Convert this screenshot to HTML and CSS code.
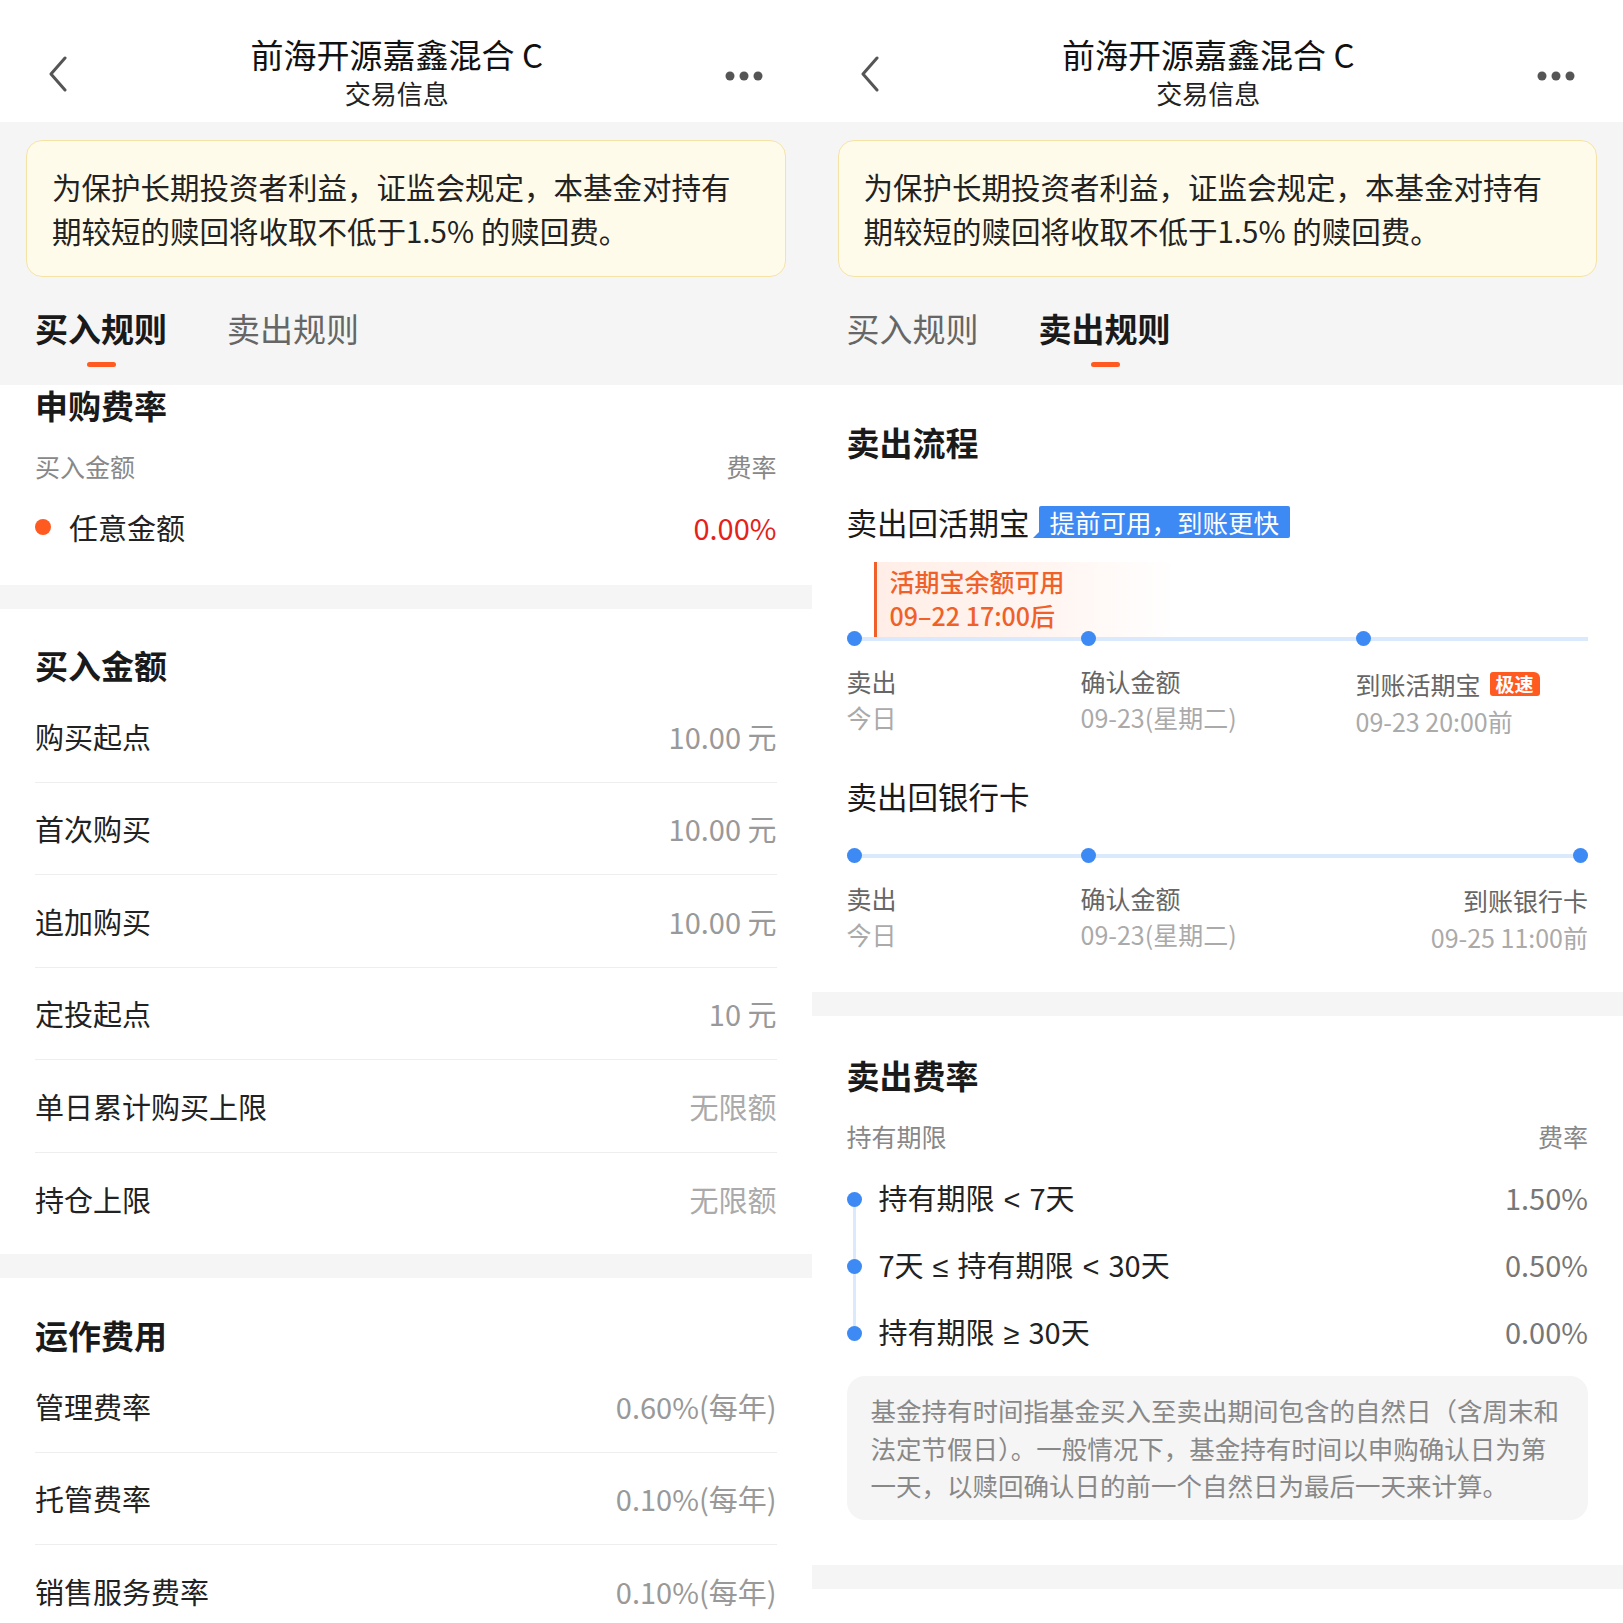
FILE: index.html
```html
<!doctype html>
<html lang="zh-CN">
  <head>
    <meta charset="UTF-8" />
    <meta name="viewport" content="width=device-width, initial-scale=1.0" />
    <title>前海开源嘉鑫混合C 交易信息</title>
    <link rel="stylesheet" href="styles.css">
  </head>
  <body>
    <div class="screens">

      <!-- 买入规则 -->
      <div class="screen">
        <div class="nav">
          <svg class="nav-back" width="20" height="36" viewBox="0 0 20 36"><path d="M17 2 L3 18 L17 34" fill="none" stroke="#555" stroke-width="3" stroke-linecap="round" stroke-linejoin="round"/></svg>
          <div class="nav-title">
            <div class="nav-name">前海开源嘉鑫混合 C</div>
            <div class="nav-sub">交易信息</div>
          </div>
          <svg class="nav-more" width="38" height="10" viewBox="0 0 38 10"><circle cx="5" cy="5" r="4.5" fill="#555"/><circle cx="19" cy="5" r="4.5" fill="#555"/><circle cx="33" cy="5" r="4.5" fill="#555"/></svg>
        </div>

        <div class="notice">为保护长期投资者利益，证监会规定，本基金对持有期较短的赎回将收取不低于1.5% 的赎回费。</div>

        <div class="tabs">
          <div class="tab active">买入规则</div>
          <div class="tab">卖出规则</div>
        </div>

        <div class="section first">
          <div class="section-title">申购费率</div>
          <div class="table-head"><span>买入金额</span><span>费率</span></div>
          <div class="fee-row">
            <span class="fee-name"><i class="bullet orange"></i>任意金额</span>
            <span class="fee-red">0.00%</span>
          </div>
        </div>

        <div class="section amounts">
          <div class="section-title">买入金额</div>
          <div class="kv"><span>购买起点</span><span class="kv-val">10.00 元</span></div>
          <div class="kv"><span>首次购买</span><span class="kv-val">10.00 元</span></div>
          <div class="kv"><span>追加购买</span><span class="kv-val">10.00 元</span></div>
          <div class="kv"><span>定投起点</span><span class="kv-val">10 元</span></div>
          <div class="kv"><span>单日累计购买上限</span><span class="kv-val light">无限额</span></div>
          <div class="kv"><span>持仓上限</span><span class="kv-val light">无限额</span></div>
        </div>

        <div class="section costs">
          <div class="section-title">运作费用</div>
          <div class="kv"><span>管理费率</span><span class="kv-val">0.60%(每年)</span></div>
          <div class="kv"><span>托管费率</span><span class="kv-val">0.10%(每年)</span></div>
          <div class="kv"><span>销售服务费率</span><span class="kv-val">0.10%(每年)</span></div>
        </div>
      </div>

      <!-- 卖出规则 -->
      <div class="screen">
        <div class="nav">
          <svg class="nav-back" width="20" height="36" viewBox="0 0 20 36"><path d="M17 2 L3 18 L17 34" fill="none" stroke="#555" stroke-width="3" stroke-linecap="round" stroke-linejoin="round"/></svg>
          <div class="nav-title">
            <div class="nav-name">前海开源嘉鑫混合 C</div>
            <div class="nav-sub">交易信息</div>
          </div>
          <svg class="nav-more" width="38" height="10" viewBox="0 0 38 10"><circle cx="5" cy="5" r="4.5" fill="#555"/><circle cx="19" cy="5" r="4.5" fill="#555"/><circle cx="33" cy="5" r="4.5" fill="#555"/></svg>
        </div>

        <div class="notice">为保护长期投资者利益，证监会规定，本基金对持有期较短的赎回将收取不低于1.5% 的赎回费。</div>

        <div class="tabs">
          <div class="tab">买入规则</div>
          <div class="tab active">卖出规则</div>
        </div>

        <div class="section flow">
          <div class="section-title">卖出流程</div>

          <div class="flow-head">
            <span>卖出回活期宝</span>
            <span class="blue-tag">提前可用，到账更快</span>
          </div>
          <div class="callout">
            <div>活期宝余额可用</div>
            <div>09–22 17:00后</div>
          </div>
          <div class="steps over">
            <div class="step"><i class="dot"></i><div class="step-name">卖出</div><div class="step-time">今日</div></div>
            <div class="step"><i class="dot"></i><div class="step-name">确认金额</div><div class="step-time">09-23(星期二)</div></div>
            <div class="step tall"><i class="dot"></i><div class="step-name">到账活期宝<span class="fast-tag">极速</span></div><div class="step-time">09-23 20:00前</div></div>
          </div>

          <div class="flow-head bank">卖出回银行卡</div>
          <div class="steps bank-steps">
            <div class="step"><i class="dot"></i><div class="step-name">卖出</div><div class="step-time">今日</div></div>
            <div class="step"><i class="dot"></i><div class="step-name">确认金额</div><div class="step-time">09-23(星期二)</div></div>
            <div class="step end"><i class="dot"></i><div class="step-name">到账银行卡</div><div class="step-time">09-25 11:00前</div></div>
          </div>
        </div>

        <div class="section sell-fee">
          <div class="section-title">卖出费率</div>
          <div class="table-head"><span>持有期限</span><span>费率</span></div>
          <div class="rate-list">
            <div class="rate-row"><span class="rate-name"><i class="bullet blue"></i>持有期限<span class="op">&lt;</span>7天</span><span class="rate-val">1.50%</span></div>
            <div class="rate-row"><span class="rate-name"><i class="bullet blue"></i>7天<span class="op">≤</span>持有期限<span class="op">&lt;</span>30天</span><span class="rate-val">0.50%</span></div>
            <div class="rate-row"><span class="rate-name"><i class="bullet blue"></i>持有期限<span class="op">≥</span>30天</span><span class="rate-val">0.00%</span></div>
          </div>
          <div class="note">基金持有时间指基金买入至卖出期间包含的自然日（含周末和法定节假日）。一般情况下，基金持有时间以申购确认日为第一天，以赎回确认日的前一个自然日为最后一天来计算。</div>
        </div>

        <div class="section tail"></div>
      </div>

    </div>
  </body>
</html>
```

FILE: styles.css
```css
body {
  margin: 0;
  padding: 0;
  font-family: "Noto Sans CJK SC", "Noto Sans", sans-serif;
  color: #222;
  background: #f5f5f5;
}

.screens {
  display: flex;
  width: 1623px;
  height: 1623px;
  overflow: hidden;
}

.screen {
  width: 50%;
  flex: none;
  height: 1623px;
  overflow: hidden;
  background: #f5f5f5;
}

/* nav bar */
.nav {
  height: 122px;
  box-sizing: border-box;
  padding: 36px 48px 12px 48px;
  background: #fff;
  display: flex;
  align-items: center;
  justify-content: space-between;
}

.nav-back {
  display: block;
  margin-top: 2px;
}

.nav-more {
  display: block;
  margin-top: 6px;
}

.nav-title {
  text-align: center;
}

.nav-name {
  font-size: 33px;
  line-height: 36px;
  color: #111;
}

.nav-sub {
  margin-top: 4px;
  font-size: 26px;
  line-height: 34px;
  color: #222;
}

/* notice */
.notice {
  margin: 18px 26px 0;
  padding: 23px 44px 24px 25px;
  background: #fffbea;
  border: 1px solid #f5e3a6;
  border-radius: 16px;
  font-size: 29.5px;
  line-height: 44px;
  color: #222;
}

/* tabs */
.tabs {
  display: flex;
  gap: 60px;
  padding: 31px 35px 0;
  height: 77px;
}

.tab {
  font-size: 33px;
  line-height: 40px;
  color: #666;
  position: relative;
}

.tab.active {
  color: #1a1a1a;
  font-weight: 700;
}

.tab.active::after {
  content: '';
  position: absolute;
  left: 50%;
  top: 54px;
  width: 29px;
  height: 5px;
  margin-left: -14px;
  border-radius: 3px;
  background: #ff5a1f;
}

/* sections */
.section {
  background: #fff;
  padding: 36px 35px 0;
  margin-bottom: 24px;
}

.section-title {
  font-size: 33px;
  line-height: 40px;
  font-weight: 700;
  color: #1a1a1a;
}

.section.first {
  padding-top: 0;
  padding-bottom: 38px;
}

.table-head {
  display: flex;
  justify-content: space-between;
  margin-top: 23px;
  font-size: 25px;
  line-height: 36px;
  color: #888;
}

.fee-row {
  display: flex;
  justify-content: space-between;
  align-items: center;
  margin-top: 23px;
  font-size: 29px;
  line-height: 40px;
}

.fee-name {
  display: flex;
  align-items: center;
}

.bullet {
  display: inline-block;
  width: 16px;
  height: 16px;
  border-radius: 50%;
  margin-right: 18px;
}

.bullet.orange {
  background: #ff5a1f;
}

.bullet.blue {
  width: 15px;
  height: 15px;
  background: #3d8af5;
  margin-right: 17px;
  vertical-align: middle;
  position: relative;
  top: -2px;
}

.op {
  font-family: "Liberation Sans", sans-serif;
  font-size: 29px;
  margin: 0 9px;
}

.fee-red {
  color: #e2231a;
}

.amounts,
.costs {
  padding-bottom: 9px;
}

.amounts .section-title,
.costs .section-title {
  margin-bottom: 5px;
}

.costs {
  padding-top: 37px;
}

.kv {
  display: flex;
  justify-content: space-between;
  align-items: center;
  height: 92.5px;
  box-sizing: border-box;
  border-bottom: 1px solid #eeeeee;
  font-size: 29px;
  color: #222;
}

.kv:last-child {
  border-bottom: none;
}

.kv-val {
  color: #999;
}

.kv-val.light {
  color: #aaa;
}

/* sell flow */
.flow {
  padding-top: 37px;
  padding-bottom: 35px;
}

.flow-head {
  display: flex;
  align-items: center;
  margin-top: 44px;
  font-size: 30.5px;
  line-height: 32px;
  color: #1a1a1a;
}

.flow-head.bank {
  margin-top: 36px;
  line-height: 40px;
}

.blue-tag {
  position: relative;
  margin-left: 9px;
  padding: 0 11px;
  height: 32px;
  line-height: 32px;
  font-size: 25.5px;
  color: #fff;
  background: #3d8af5;
  border-radius: 2px 2px 2px 0;
}

.blue-tag::before {
  content: '';
  position: absolute;
  left: -6px;
  bottom: 0;
  border-bottom: 6px solid #3d8af5;
  border-left: 6px solid transparent;
}

.callout {
  margin: 24px 0 0 27px;
  width: 286px;
  padding: 2px 0 6px 13px;
  border-left: 3px solid #f0602a;
  background: linear-gradient(90deg, #ffeee7 0%, #fff5f1 55%, rgba(255, 255, 255, 0) 100%);
  font-size: 25px;
  line-height: 34px;
  font-weight: 500;
  color: #f0612a;
}

.steps {
  display: grid;
  grid-template-columns: 234px 275px 1fr;
  background: linear-gradient(#dbe9fc, #dbe9fc) no-repeat 0 5.5px / 100% 4px;
}

.steps.over {
  margin-top: -7px;
}

.steps.bank-steps {
  margin-top: 32px;
}

.dot {
  display: block;
  width: 15px;
  height: 15px;
  border-radius: 50%;
  background: #3d8af5;
}

.step-name {
  display: flex;
  align-items: center;
  margin-top: 17px;
  font-size: 25px;
  line-height: 36px;
  color: #666;
}

.step.tall .step-name {
  margin-top: 19px;
  line-height: 38px;
}

.step-time {
  font-size: 25px;
  line-height: 37px;
  color: #aaa;
}

.step.end {
  text-align: right;
}

.step.end .dot {
  margin-left: auto;
}

.step.end .step-name {
  justify-content: flex-end;
  margin-top: 19px;
}

.step.end .step-time {
  line-height: 39px;
}

.fast-tag {
  margin-left: 9px;
  padding: 0 6px;
  height: 24px;
  line-height: 24px;
  font-size: 19px;
  font-weight: 700;
  color: #fff;
  background: #ff5a1f;
  border-radius: 3px 6px 3px 3px;
}

/* sell fee */
.sell-fee {
  padding-top: 39px;
  padding-bottom: 45px;
}

.rate-list {
  margin-top: 9px;
  background: linear-gradient(#dbe9fc, #dbe9fc) no-repeat 6px 33.5px / 3px calc(100% - 67px);
}

.rate-row {
  display: flex;
  justify-content: space-between;
  align-items: center;
  height: 67px;
  font-size: 29px;
  color: #222;
}

.rate-val {
  color: #777;
}

.note {
  margin-top: 12px;
  padding: 15px 24px 16px;
  background: #f5f5f5;
  border-radius: 18px;
  font-size: 25.5px;
  line-height: 37.5px;
  color: #888;
}

.tail {
  height: 40px;
  padding: 0;
}
```
